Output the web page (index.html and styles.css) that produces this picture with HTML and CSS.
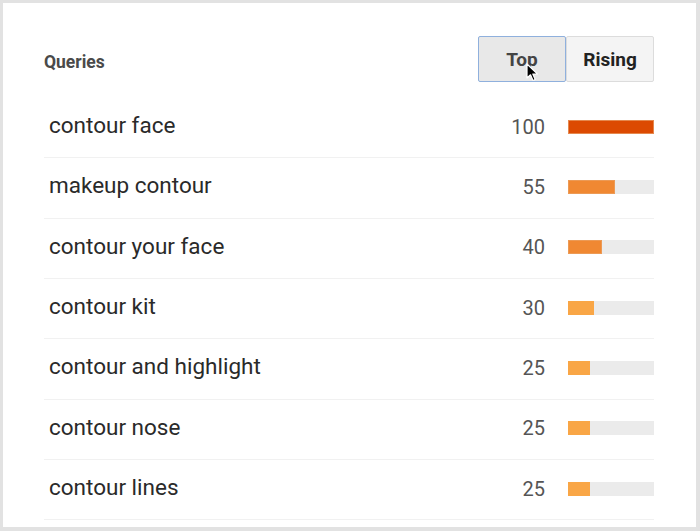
FILE: index.html
```html
<!DOCTYPE html>
<html>
<head>
<meta charset="utf-8">
<link rel="stylesheet" href="styles.css">
</head>
<body>
<div class="card">
  <div class="header">
    <div class="title">Queries</div>
    <div class="toggle">
      <button class="btn btn-active">Top
        <svg class="cursor" width="13" height="19" viewBox="0 0 13 19"><path d="M1 1 L1 15 L4.5 11.8 L7 17.5 L9.2 16.5 L6.8 11 L11.5 11 Z" fill="#000" stroke="#fff" stroke-width="1.2" stroke-linejoin="round"/></svg>
      </button>
      <button class="btn">Rising</button>
    </div>
  </div>
  <div class="row"><span class="q">contour face</span><span class="n">100</span><span class="bar"><span class="fill c1" style="width:100%"></span></span></div>
  <div class="row"><span class="q">makeup contour</span><span class="n">55</span><span class="bar"><span class="fill c2" style="width:55%"></span></span></div>
  <div class="row"><span class="q">contour your face</span><span class="n">40</span><span class="bar"><span class="fill c2" style="width:40%"></span></span></div>
  <div class="row"><span class="q">contour kit</span><span class="n">30</span><span class="bar"><span class="fill c3" style="width:30%"></span></span></div>
  <div class="row"><span class="q">contour and highlight</span><span class="n">25</span><span class="bar"><span class="fill c3" style="width:25%"></span></span></div>
  <div class="row"><span class="q">contour nose</span><span class="n">25</span><span class="bar"><span class="fill c3" style="width:25%"></span></span></div>
  <div class="row"><span class="q">contour lines</span><span class="n">25</span><span class="bar"><span class="fill c3" style="width:25%"></span></span></div>
</div>
</body>
</html>
```
FILE: styles.css
```css
html, body {
  margin: 0;
  padding: 0;
  background: #e2e2e2;
  width: 700px;
  height: 531px;
  overflow: hidden;
  font-family: Roboto, "Liberation Sans", sans-serif;
}
.card {
  margin: 3px 0 0 3px;
  width: 693px;
  height: 524px;
  background: #fff;
  box-sizing: border-box;
  padding: 0 42px 0 41px;
}
.header {
  display: flex;
  justify-content: space-between;
  align-items: center;
  padding: 33px 0 16px 0;
}
.title {
  font-size: 17.5px;
  font-weight: bold;
  color: #4a4a4a;
  padding-top: 6px;
}
.toggle {
  display: flex;
}
.btn {
  position: relative;
  height: 46px;
  width: 88px;
  border: 1px solid #dcdcdc;
  background: #f4f4f4;
  font-family: Roboto, "Liberation Sans", sans-serif;
  font-size: 19px;
  font-weight: bold;
  color: #222;
  border-radius: 2px;
  padding: 0;
  margin: 0;
}
.btn-active {
  background: #e8e8e8;
  border-color: #8fb0dd;
  color: #444;
  z-index: 1;
}
.cursor {
  position: absolute;
  left: 47px;
  top: 26px;
}
.row {
  display: flex;
  align-items: center;
  height: 59.33px;
  border-bottom: 1px solid #f1f1f1;
  padding-bottom: 1px;
  box-sizing: content-box;
  margin-top: -1px;
}
.row:first-of-type { margin-top: 0; }
.q {
  flex: 1;
  padding-left: 5px;
  font-size: 22.5px;
  color: #2a2a2a;
  padding-bottom: 3px;
}
.n {
  font-size: 20px;
  color: #555;
  text-align: right;
  margin-right: 23px;
}
.bar {
  width: 86px;
  height: 14px;
  background: #ebebeb;
  display: flex;
}
.fill { height: 100%; box-sizing: border-box; }
.c1 { background: #dc4a02; border: 1px solid #e5884e; }
.c2 { background: #f08832; border: 1px solid #ec9a55; }
.c3 { background: #f9a646; }
```
